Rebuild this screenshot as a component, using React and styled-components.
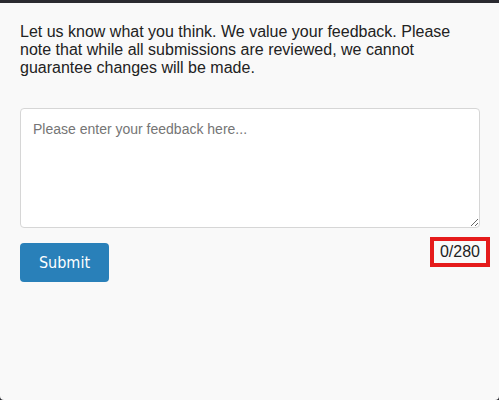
import React, { useState } from "react";
import styled, { createGlobalStyle } from "styled-components";

const Global = createGlobalStyle`
  html, body { margin: 0; padding: 0; background: #2a2a30; }
  body { font-family: "Liberation Sans", Arial, sans-serif; }
  * { box-sizing: border-box; }
`;

const Frame = styled.div`
  padding-top: 3px;
  height: 400px;
  background: #2a2a30;
`;

const Panel = styled.div`
  height: 397px;
  background: #f9f9f9;
  border-radius: 0 0 4px 4px;
  padding: 20px 19px 0 20px;
  display: flex;
  flex-direction: column;
`;

const Intro = styled.p`
  margin: 0;
  font-size: 16px;
  line-height: 18px;
  color: #222;
`;

const Field = styled.textarea`
  margin-top: 31px;
  width: 460px;
  height: 120px;
  border: 1px solid #d6d6d6;
  border-radius: 4px;
  background: #fff;
  padding: 12px;
  font-family: "Liberation Sans", Arial, sans-serif;
  font-size: 14px;
  color: #333;
  resize: vertical;
  outline: none;
  &::placeholder { color: #757575; }
`;

const Row = styled.div`
  margin-top: 9px;
  width: 460px;
  display: flex;
  justify-content: space-between;
  align-items: flex-start;
`;

const SubmitButton = styled.button`
  margin-top: 6px;
  width: 89px;
  height: 39px;
  border: none;
  border-radius: 4px;
  background: #2980b9;
  color: #fff;
  font-family: "DejaVu Sans Condensed", "DejaVu Sans", sans-serif;
  font-size: 16px;
  cursor: pointer;
`;

const Counter = styled.span`
  margin-right: -10px;
  border: 4px solid #e51b1b;
  padding: 2px 6px;
  font-size: 16px;
  line-height: 18px;
  color: #222;
`;

export default function App() {
  const [text, setText] = useState("");
  return (
    <>
      <Global />
      <Frame>
        <Panel>
          <Intro>
            Let us know what you think. We value your feedback. Please note that
            while all submissions are reviewed, we cannot guarantee changes will
            be made.
          </Intro>
          <Field
            placeholder="Please enter your feedback here..."
            maxLength={280}
            value={text}
            onChange={(e) => setText(e.target.value)}
          />
          <Row>
            <SubmitButton>Submit</SubmitButton>
            <Counter>{text.length}/280</Counter>
          </Row>
        </Panel>
      </Frame>
    </>
  );
}
